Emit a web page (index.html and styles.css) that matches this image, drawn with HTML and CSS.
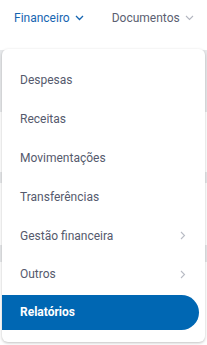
FILE: index.html
```html
<!doctype html>
<html lang="pt">
<head>
    <meta charset="utf-8">
    <title>Menu financeiro</title>
    <link rel="stylesheet" href="styles.css">
</head>
<body>
    <nav class="topnav">
        <a class="nav-link nav-link-active" href="#">Financeiro
            <svg class="caret" width="9" height="6" viewBox="0 0 9 6"><path d="M1 1l3.5 3.5L8 1" fill="none" stroke="currentColor" stroke-width="1.3"/></svg>
        </a>
        <a class="nav-link" href="#">Documentos
            <svg class="caret" width="9" height="6" viewBox="0 0 9 6"><path d="M1 1l3.5 3.5L8 1" fill="none" stroke="currentColor" stroke-width="1.1"/></svg>
        </a>
    </nav>

    <div class="page">
        <div class="band band-a"></div>
        <div class="band band-b"></div>
        <div class="band band-c"></div>
    </div>

    <ul class="dropdown">
        <li class="item">Despesas</li>
        <li class="item">Receitas</li>
        <li class="item">Movimentações</li>
        <li class="item">Transferências</li>
        <li class="item has-sub">Gestão financeira
            <svg class="arrow" width="6" height="9" viewBox="0 0 6 9"><path d="M1 1l3.5 3.5L1 8" fill="none" stroke="currentColor" stroke-width="1.1"/></svg>
        </li>
        <li class="item has-sub">Outros
            <svg class="arrow" width="6" height="9" viewBox="0 0 6 9"><path d="M1 1l3.5 3.5L1 8" fill="none" stroke="currentColor" stroke-width="1.1"/></svg>
        </li>
        <li class="item item-active">Relatórios</li>
    </ul>
</body>
</html>
```

FILE: styles.css
```css
* {
    box-sizing: border-box;
}
body {
    margin: 0;
    background-color: #fff;
    font-family: Roboto, "Liberation Sans", sans-serif;
    position: relative;
    height: 345px;
    overflow: hidden;
}
.topnav {
    display: flex;
    height: 36px;
    padding: 8px 0 0 14px;
    gap: 28px;
}
.nav-link {
    display: flex;
    align-items: center;
    height: 20px;
    font-size: 12px;
    color: #5b5f72;
    text-decoration: none;
    gap: 5px;
}
.nav-link .caret {
    color: #b3b6c0;
}
.nav-link-active,
.nav-link-active .caret {
    color: #1565b1;
}
.page {
    display: flex;
    flex-direction: column;
    padding-top: 14px;
}
.band {
    background-color: #e7e9eb;
}
.band-a {
    height: 62px;
}
.band-b {
    height: 11px;
    margin-top: 60px;
}
.band-c {
    height: 17px;
    margin-top: 62px;
}
.dropdown {
    position: absolute;
    top: 49px;
    left: 2px;
    width: 203px;
    height: 293px;
    margin: 0;
    padding: 12px 6px 0 0;
    list-style: none;
    background-color: #fff;
    border-radius: 6px;
    box-shadow: 0 1px 3px rgba(0, 0, 0, 0.25);
}
.item {
    display: flex;
    align-items: center;
    justify-content: space-between;
    height: 38.8px;
    padding: 0 13px 0 18px;
    font-size: 12px;
    color: #555a6d;
}
.item .arrow {
    color: #b9bcc5;
}
.item-active {
    height: 35px;
    margin-top: 1px;
    background-color: #0067b3;
    color: #fff;
    font-weight: 700;
    border-radius: 0 18px 18px 0;
}
```
